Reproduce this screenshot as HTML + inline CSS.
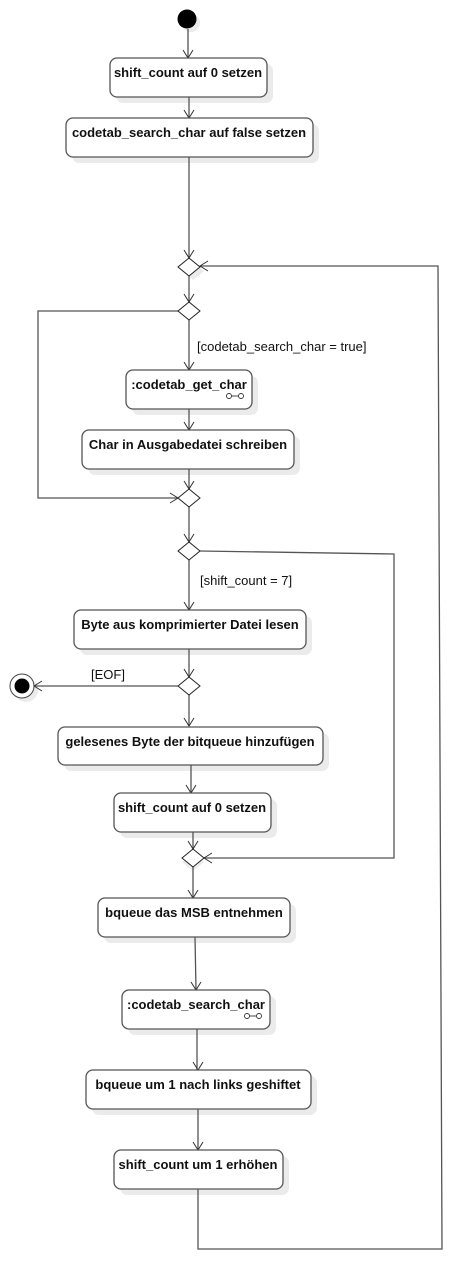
<!DOCTYPE html>
<html><head><meta charset="utf-8"><style>
html,body{margin:0;padding:0;background:#fff;}
svg{display:block;}
text{font-family:"Liberation Sans",Arial,sans-serif;font-size:13px;fill:#111;}
.b{font-weight:bold;}
.box{fill:#fff;stroke:#555;stroke-width:1.3;}
.sh{fill:#ebebeb;}
.ln{fill:none;stroke:#555;stroke-width:1.3;}
.ar{fill:none;stroke:#333;stroke-width:1;}
.dm{fill:#fff;stroke:#222;stroke-width:1;}
</style></head><body>
<svg width="453" height="1261" viewBox="0 0 453 1261" xmlns="http://www.w3.org/2000/svg">
<g class="sh">
<rect x="116" y="64" width="157" height="39" rx="7"/>
<rect x="72" y="124" width="247" height="39" rx="7"/>
<rect x="132" y="376" width="126" height="39" rx="7"/>
<rect x="88" y="436" width="212" height="39" rx="7"/>
<rect x="80" y="616" width="232" height="39" rx="7"/>
<rect x="64" y="733" width="265" height="38" rx="7"/>
<rect x="120" y="799" width="157" height="39" rx="7"/>
<rect x="104" y="904" width="192" height="39" rx="7"/>
<rect x="128" y="996" width="148" height="39" rx="7"/>
<rect x="92" y="1076" width="225" height="39" rx="7"/>
<rect x="120" y="1156" width="169" height="39" rx="7"/>
<circle cx="191" cy="23" r="9"/>
<circle cx="26" cy="690" r="12"/>
<polygon points="193,263 204,271 193,280 182,271"/>
<polygon points="193,853 204,862 193,871 182,862"/>
</g>
<circle cx="187" cy="19" r="9.5" fill="#000"/>
<path class="ln" d="M188 29V58 M189 97V118 M189 157V258 M189 276V302 M189 320V370 M189 409V430 M189 469V489 M189 507V542 M189 560V610 M189 649V677 M189 695V726 M191 765V793 M193 832V849 M193 867V898 M195 937L196 990 M197 1029V1070 M198 1109V1150 M198 1189V1249H442L438 266H200 M178 311H38V498H178 M200 551L394 554V858H204 M178 686H34"/>
<path class="ar" d="M183 50L188 58L193 50 M184 110L189 118L194 110 M184 250L189 258L194 250 M184 294L189 302L194 294 M184 362L189 370L194 362 M184 422L189 430L194 422 M184 481L189 489L194 481 M184 534L189 542L194 534 M184 602L189 610L194 602 M184 669L189 677L194 669 M184 718L189 726L194 718 M186 785L191 793L196 785 M188 841L193 849L198 841 M188 890L193 898L198 890 M191 982L196 990L201 982 M193 1062L198 1070L203 1062 M193 1142L198 1150L203 1142 M208 261L200 266L208 271 M170 493L178 498L170 503 M212 853L204 858L212 863 M42 681L34 686L42 691"/>
<g class="dm">
<polygon points="189,258 200,267 189,276 178,267"/>
<polygon points="189,302 200,311 189,320 178,311"/>
<polygon points="189,489 200,498 189,507 178,498"/>
<polygon points="189,542 200,551 189,560 178,551"/>
<polygon points="189,677 200,686 189,695 178,686"/>
<polygon points="193,849 204,858 193,867 182,858"/>
</g>
<circle cx="22" cy="686" r="12" fill="#fff" stroke="#444" stroke-width="1"/>
<circle cx="22" cy="686" r="7.5" fill="#000"/>
<rect class="box" x="110" y="58" width="157" height="39" rx="7"/>
<rect class="box" x="66" y="118" width="247" height="39" rx="7"/>
<rect class="box" x="126" y="370" width="126" height="39" rx="7"/>
<rect class="box" x="82" y="430" width="212" height="39" rx="7"/>
<rect class="box" x="74" y="610" width="232" height="39" rx="7"/>
<rect class="box" x="58" y="727" width="265" height="38" rx="7"/>
<rect class="box" x="114" y="793" width="157" height="39" rx="7"/>
<rect class="box" x="98" y="898" width="192" height="39" rx="7"/>
<rect class="box" x="122" y="990" width="148" height="39" rx="7"/>
<rect class="box" x="86" y="1070" width="225" height="39" rx="7"/>
<rect class="box" x="114" y="1150" width="169" height="39" rx="7"/>
<g fill="none" stroke="#333" stroke-width="0.9">
<circle cx="229" cy="396" r="2.5"/><circle cx="241" cy="396" r="2.5"/><path d="M231.5 396H238.5"/>
<circle cx="247" cy="1016" r="2.5"/><circle cx="259" cy="1016" r="2.5"/><path d="M249.5 1016H256.5"/>
</g>
<g class="b" text-anchor="middle">
<text x="188" y="77">shift_count auf 0 setzen</text>
<text x="189" y="137">codetab_search_char auf false setzen</text>
<text x="189" y="389">:codetab_get_char</text>
<text x="188" y="449">Char in Ausgabedatei schreiben</text>
<text x="190" y="629">Byte aus komprimierter Datei lesen</text>
<text x="190" y="746">gelesenes Byte der bitqueue hinzufügen</text>
<text x="192" y="812">shift_count auf 0 setzen</text>
<text x="194" y="917">bqueue das MSB entnehmen</text>
<text x="196" y="1009">:codetab_search_char</text>
<text x="198" y="1089">bqueue um 1 nach links geshiftet</text>
<text x="198" y="1169">shift_count um 1 erhöhen</text>
</g>
<text x="197" y="351">[codetab_search_char = true]</text>
<text x="200" y="585">[shift_count = 7]</text>
<text x="91" y="679">[EOF]</text>
</svg>
</body></html>
